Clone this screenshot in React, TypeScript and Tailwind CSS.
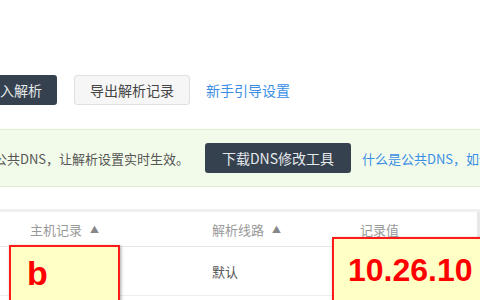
import React from "react";

const font = { fontFamily: '"Noto Sans CJK SC", "Liberation Sans", sans-serif' };

export default function App() {
  return (
    <div
      className="relative w-[480px] h-[300px] overflow-hidden bg-white text-[14px] leading-none"
      style={font}
    >
      {/* toolbar */}
      <div className="flex items-center pt-[75px] h-[30px] box-content">
        <div className="ml-[-29px] w-[86px] h-[30px] flex items-center justify-center rounded-[3px] bg-[#35414f] text-[#e6e9ec] whitespace-nowrap shrink-0">
          导入解析
        </div>
        <div className="ml-[17px] w-[116px] h-[30px] flex items-center justify-center rounded-[3px] bg-[#f6f6f6] border border-[#e0e0e0] text-[#444] whitespace-nowrap shrink-0">
          导出解析记录
        </div>
        <div className="ml-[16px] text-[#3a8ee6] whitespace-nowrap">新手引导设置</div>
      </div>

      {/* banner */}
      <div className="mt-[24px] h-[58px] bg-[#f2fbea] border-y border-[#dcefcf] flex items-center whitespace-nowrap">
        <span className="ml-[-6px] w-[199px] shrink-0 text-[13px] text-[#555]">公共DNS，让解析设置实时生效。</span>
        <div className="ml-[12px] w-[146px] h-[30px] flex items-center justify-center rounded-[3px] bg-[#35414f] text-[#e6e9ec] shrink-0">
          下载DNS修改工具
        </div>
        <span className="ml-[11px] text-[13px] text-[#3a8ee6]">什么是公共DNS，如何修改？</span>
      </div>

      {/* table */}
      <div className="mt-[22px] border-t-[3px] border-[#f0f0f0]">
        <div className="h-[35px] flex items-center border-b border-[#e6e6e6] text-[13px] text-[#999]">
          <div className="w-[212px] pl-[30px] flex items-center gap-[8px]">
            主机记录 <span className="text-[9px] text-[#888]">▲</span>
          </div>
          <div className="w-[148px] flex items-center gap-[8px]">
            解析线路 <span className="text-[9px] text-[#888]">▲</span>
          </div>
          <div className="flex-1">记录值</div>
          <div className="w-[3px] h-[35px] bg-[#e8e8e8]" />
        </div>
        <div className="h-[49px] flex items-center border-b border-[#eeeeee] text-[13px] text-[#555]">
          <div className="w-[212px]" />
          <div className="w-[148px]">默认</div>
        </div>
      </div>

      {/* highlight overlays */}
      <div className="absolute left-[9px] top-[245px] w-[111px] h-[70px] bg-[#ffffc6] border-2 border-[#ff1a1a] shadow-[1px_1px_3px_rgba(0,0,0,0.35)] pl-[16px] pt-[9px]">
        <span
          className="text-[34px] font-bold text-[#ff0000] leading-none"
          style={{ fontFamily: '"Liberation Sans", sans-serif' }}
        >
          b
        </span>
      </div>
      <div className="absolute left-[332px] top-[237px] w-[170px] h-[80px] bg-[#ffffc6] border-2 border-[#ff1a1a] shadow-[1px_1px_3px_rgba(0,0,0,0.35)] pl-[14px] pt-[15px]">
        <span
          className="text-[32px] font-bold text-[#ff0000] leading-none whitespace-nowrap"
          style={{ fontFamily: '"Liberation Sans", sans-serif' }}
        >
          10.26.10
        </span>
      </div>
    </div>
  );
}
